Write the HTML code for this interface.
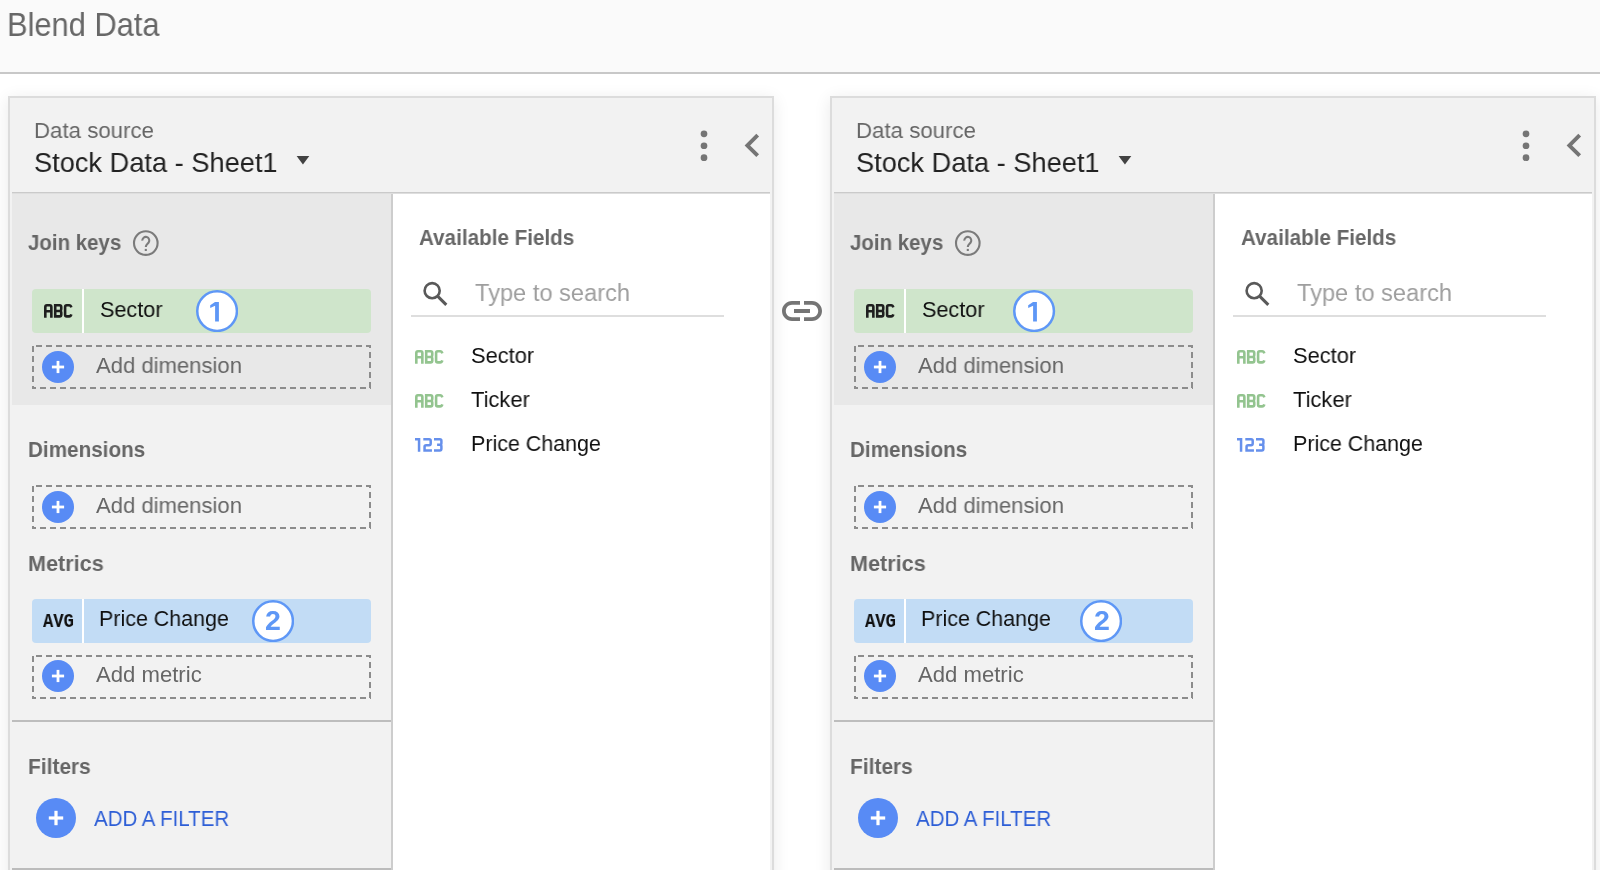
<!DOCTYPE html>
<html><head><meta charset="utf-8"><title>Blend Data</title><style>
html,body{margin:0;padding:0;width:1600px;height:870px;overflow:hidden;background:#fff;font-family:"Liberation Sans",sans-serif}
.a{position:absolute}
.t{position:absolute;white-space:nowrap;transform-origin:0 0;will-change:transform}
.hdr{left:0;top:0;width:1600px;height:72px;background:#fafafa;border-bottom:2px solid #c8c8c8}
.panel{background:#f2f2f2;border:2px solid #dcdcdc;box-shadow:0 3px 16px rgba(0,0,0,0.09)}
.chip{width:339px;height:44px;border-radius:4px}
.g{background:#cfe5cb}
.b{background:#c2dcf5}
.dash{width:335px;height:40px;border:2px dashed #7a7a7a;border-radius:3px}
</style></head>
<body>
<div class="a hdr"></div>
<div class="t" style="left:6.95px;top:7.80px;font-family:'Liberation Sans',sans-serif;font-weight:400;font-size:33.285px;line-height:33.285px;color:#676767;transform:scaleX(0.9274)">Blend Data</div>
<div class="a panel" style="left:8px;top:96px;width:762px;height:800px"></div>
<div class="a" style="left:12px;top:192px;width:758px;height:1px;background:#cacaca"></div>
<div class="a" style="left:12px;top:193px;width:758px;height:1px;background:#dedede"></div>
<div class="a" style="left:12px;top:194px;width:379px;height:211px;background:#e8e8e8"></div>
<div class="a" style="left:391px;top:194px;width:2px;height:700px;background:#cdcdcd"></div>
<div class="a" style="left:393px;top:194px;width:377px;height:700px;background:#fff"></div>
<div class="a" style="left:12px;top:720px;width:379px;height:2px;background:#bdbdbd"></div>
<div class="a" style="left:12px;top:868px;width:379px;height:2px;background:#bcbcbc"></div>
<div class="t" style="left:34.03px;top:118.60px;font-family:'Liberation Sans',sans-serif;font-weight:400;font-size:22.675px;line-height:22.675px;color:#666666;transform:scaleX(0.9820)">Data source</div>
<div class="t" style="left:33.71px;top:148.25px;font-family:'Liberation Sans',sans-serif;font-weight:400;font-size:28.562px;line-height:28.562px;color:#222222;transform:scaleX(0.9534)">Stock Data - Sheet1</div>
<svg class="a" style="left:296px;top:155px" width="14" height="10" viewBox="0 0 14 10"><path fill="#424242" d="M0.6 1 H13.3 L6.95 9.4 Z"/></svg>
<svg class="a" style="left:696px;top:127.7px" width="16" height="36" viewBox="0 0 16 36"><circle cx="8" cy="5.8" r="3.35" fill="#757575"/><circle cx="8" cy="17.75" r="3.35" fill="#757575"/><circle cx="8" cy="29.7" r="3.35" fill="#757575"/></svg>
<svg class="a" style="left:728.7px;top:122.2px" width="46.8" height="46.8" viewBox="0 0 24 24"><path fill="#757575" d="M15.41 7.41L14 6l-6 6 6 6 1.41-1.41L10.83 12z"/></svg>
<div class="t" style="left:28.16px;top:231.60px;font-family:'Liberation Sans',sans-serif;font-weight:700;font-size:21.221px;line-height:21.221px;color:#666666;transform:scaleX(0.9640)">Join keys</div>
<svg class="a" style="left:128px;top:226px" width="36" height="36" viewBox="128 226 36 36"><circle cx="145.8" cy="243.1" r="11.8" fill="none" stroke="#7b7b7b" stroke-width="2.1"/><path d="M142.3 240.6 A3.5 3.5 0 1 1 148.7 242.4 C147.7 243.9 145.8 244.6 145.8 246.9" fill="none" stroke="#7b7b7b" stroke-width="2.1"/><rect x="144.75" y="248.9" width="2.1" height="2.1" fill="#7b7b7b"/></svg>
<div class="a chip g" style="left:32px;top:289px"></div>
<div class="a" style="left:82px;top:289px;width:2px;height:44px;background:#fff"></div>
<svg class="a" style="left:44.3px;top:304.2px" width="30" height="13.7" viewBox="0 0 30 13.7"><g fill="none" stroke="#1f1f1f" stroke-width="2.6" stroke-linejoin="miter"><path transform="translate(0.00,0)" d="M1.3,13.7 V2.9000000000000004 Q1.3,1.3 2.9000000000000004,1.3 H5.75 Q7.3500000000000005,1.3 7.3500000000000005,2.9000000000000004 V13.7 M1.3,7.2 H7.3500000000000005"/><path transform="translate(9.90,0)" d="M1.3,0 V13.7 M0,1.3 H5.75 Q7.3500000000000005,1.3 7.3500000000000005,2.9000000000000004 V4.700000000000001 Q7.3500000000000005,7.0 5.75,7.0 H1.3 M5.75,7.0 Q7.3500000000000005,7.0 7.3500000000000005,8.6 V10.799999999999999 Q7.3500000000000005,12.399999999999999 5.75,12.399999999999999 H0"/><path transform="translate(19.80,0)" d="M7.550000000000001,3.3 Q6.95,1.3 5.3500000000000005,1.3 H2.9000000000000004 Q1.3,1.3 1.3,2.9000000000000004 V10.799999999999999 Q1.3,12.399999999999999 2.9000000000000004,12.399999999999999 H5.3500000000000005 Q6.95,12.399999999999999 7.550000000000001,10.399999999999999"/></g></svg>
<div class="t" style="left:99.77px;top:299.00px;font-family:'Liberation Sans',sans-serif;font-weight:400;font-size:22.166px;line-height:22.166px;color:#0f0f0f;transform:scaleX(0.9761)">Sector</div>
<svg class="a" style="left:195.60px;top:290.10px" width="42.2" height="42.2" viewBox="0 0 42.2 42.2"><circle cx="21.1" cy="21.1" r="19.85" fill="#fff" stroke="#5e97f6" stroke-width="2.5"/></svg>
<svg class="a" style="left:210.40px;top:301.90px" width="10" height="20" viewBox="0 0 10 20"><path fill="#5e97f6" d="M5.0 0 H8.9 V19.5 H5.1 V3.7 L0.2 5.9 V3.2 Z"/></svg>
<svg class="a" style="left:32px;top:345px" width="339" height="44" viewBox="0 0 339 44"><g stroke="#8c8c8c" stroke-width="2" stroke-dasharray="6 4" fill="none"><line x1="0" y1="1" x2="339" y2="1" stroke-dashoffset="6"/><line x1="338" y1="0" x2="338" y2="44" stroke-dashoffset="3"/><line x1="0" y1="43" x2="339" y2="43" stroke-dashoffset="2"/><line x1="1" y1="0" x2="1" y2="44" stroke-dashoffset="9"/></g></svg>
<svg class="a" style="left:41.80px;top:350.60px" width="32" height="32" viewBox="0 0 32 32"><circle cx="16" cy="16" r="16" fill="#588bf5"/><rect x="9.9" y="14.6" width="12.2" height="2.8" fill="#fff"/><rect x="14.6" y="9.9" width="2.8" height="12.2" fill="#fff"/></svg>
<div class="t" style="left:96.00px;top:354.80px;font-family:'Liberation Sans',sans-serif;font-weight:400;font-size:22.239px;line-height:22.239px;color:#666666;transform:scaleX(0.9931)">Add dimension</div>
<div class="t" style="left:27.93px;top:437.80px;font-family:'Liberation Sans',sans-serif;font-weight:700;font-size:22.675px;line-height:22.675px;color:#666666;transform:scaleX(0.9127)">Dimensions</div>
<svg class="a" style="left:32px;top:485px" width="339" height="44" viewBox="0 0 339 44"><g stroke="#8c8c8c" stroke-width="2" stroke-dasharray="6 4" fill="none"><line x1="0" y1="1" x2="339" y2="1" stroke-dashoffset="6"/><line x1="338" y1="0" x2="338" y2="44" stroke-dashoffset="3"/><line x1="0" y1="43" x2="339" y2="43" stroke-dashoffset="2"/><line x1="1" y1="0" x2="1" y2="44" stroke-dashoffset="9"/></g></svg>
<svg class="a" style="left:41.80px;top:490.60px" width="32" height="32" viewBox="0 0 32 32"><circle cx="16" cy="16" r="16" fill="#588bf5"/><rect x="9.9" y="14.6" width="12.2" height="2.8" fill="#fff"/><rect x="14.6" y="9.9" width="2.8" height="12.2" fill="#fff"/></svg>
<div class="t" style="left:96.00px;top:494.80px;font-family:'Liberation Sans',sans-serif;font-weight:400;font-size:22.239px;line-height:22.239px;color:#666666;transform:scaleX(0.9931)">Add dimension</div>
<div class="t" style="left:27.55px;top:552.90px;font-family:'Liberation Sans',sans-serif;font-weight:700;font-size:22.384px;line-height:22.384px;color:#666666;transform:scaleX(0.9658)">Metrics</div>
<div class="a chip b" style="left:32px;top:599px"></div>
<div class="a" style="left:82px;top:599px;width:2px;height:44px;background:#fff"></div>
<div class="t" style="left:42.90px;top:612.10px;font-family:'Liberation Mono',monospace;font-weight:700;font-size:20.040px;line-height:20.040px;color:#0f0f0f;transform:scaleX(0.8567)">AVG</div>
<div class="t" style="left:99.23px;top:608.20px;font-family:'Liberation Sans',sans-serif;font-weight:400;font-size:22.457px;line-height:22.457px;color:#0f0f0f;transform:scaleX(0.9553)">Price Change</div>
<svg class="a" style="left:251.70px;top:599.50px" width="42.2" height="42.2" viewBox="0 0 42.2 42.2"><circle cx="21.1" cy="21.1" r="19.85" fill="#fff" stroke="#5e97f6" stroke-width="2.5"/></svg>
<div class="t" style="left:265.27px;top:607.40px;font-family:'Liberation Sans',sans-serif;font-weight:700;font-size:27.617px;line-height:27.617px;color:#5e97f6;transform:scaleX(1.0340)">2</div>
<svg class="a" style="left:32px;top:655px" width="339" height="44" viewBox="0 0 339 44"><g stroke="#8c8c8c" stroke-width="2" stroke-dasharray="6 4" fill="none"><line x1="0" y1="1" x2="339" y2="1" stroke-dashoffset="6"/><line x1="338" y1="0" x2="338" y2="44" stroke-dashoffset="3"/><line x1="0" y1="43" x2="339" y2="43" stroke-dashoffset="2"/><line x1="1" y1="0" x2="1" y2="44" stroke-dashoffset="9"/></g></svg>
<svg class="a" style="left:41.80px;top:660.40px" width="32" height="32" viewBox="0 0 32 32"><circle cx="16" cy="16" r="16" fill="#588bf5"/><rect x="9.9" y="14.6" width="12.2" height="2.8" fill="#fff"/><rect x="14.6" y="9.9" width="2.8" height="12.2" fill="#fff"/></svg>
<div class="t" style="left:96.40px;top:664.00px;font-family:'Liberation Sans',sans-serif;font-weight:400;font-size:21.803px;line-height:21.803px;color:#666666;transform:scaleX(1.0145)">Add metric</div>
<div class="t" style="left:27.50px;top:756.20px;font-family:'Liberation Sans',sans-serif;font-weight:700;font-size:22.457px;line-height:22.457px;color:#666666;transform:scaleX(0.9323)">Filters</div>
<svg class="a" style="left:36.00px;top:798.20px" width="40" height="40" viewBox="0 0 40 40"><circle cx="20" cy="20" r="20" fill="#588bf5"/><rect x="12.8" y="18.4" width="14.4" height="3.2" fill="#fff"/><rect x="18.4" y="12.8" width="3.2" height="14.4" fill="#fff"/></svg>
<div class="t" style="left:94.30px;top:808.20px;font-family:'Liberation Sans',sans-serif;font-weight:400;font-size:22.457px;line-height:22.457px;color:#2d5ed6;transform:scaleX(0.9138)">ADD A FILTER</div>
<div class="t" style="left:418.92px;top:226.70px;font-family:'Liberation Sans',sans-serif;font-weight:700;font-size:21.657px;line-height:21.657px;color:#676767;transform:scaleX(0.9536)">Available Fields</div>
<svg class="a" style="left:0px;top:0px" width="460" height="320" viewBox="0 0 460 320"><circle cx="432.15" cy="290.7" r="7.55" fill="none" stroke="#595959" stroke-width="2.6"/><path d="M437.6 296.15 L446.3 304.85" stroke="#595959" stroke-width="3"/></svg>
<div class="t" style="left:475.21px;top:281.00px;font-family:'Liberation Sans',sans-serif;font-weight:400;font-size:24.128px;line-height:24.128px;color:#9e9e9e;transform:scaleX(0.9801)">Type to search</div>
<div class="a" style="left:411px;top:315px;width:313px;height:2px;background:#dedede"></div>
<svg class="a" style="left:415.2px;top:350px" width="30" height="13.7" viewBox="0 0 30 13.7"><g fill="none" stroke="#93c48f" stroke-width="2.6" stroke-linejoin="miter"><path transform="translate(0.00,0)" d="M1.3,13.7 V2.9000000000000004 Q1.3,1.3 2.9000000000000004,1.3 H5.75 Q7.3500000000000005,1.3 7.3500000000000005,2.9000000000000004 V13.7 M1.3,7.2 H7.3500000000000005"/><path transform="translate(9.90,0)" d="M1.3,0 V13.7 M0,1.3 H5.75 Q7.3500000000000005,1.3 7.3500000000000005,2.9000000000000004 V4.700000000000001 Q7.3500000000000005,7.0 5.75,7.0 H1.3 M5.75,7.0 Q7.3500000000000005,7.0 7.3500000000000005,8.6 V10.799999999999999 Q7.3500000000000005,12.399999999999999 5.75,12.399999999999999 H0"/><path transform="translate(19.80,0)" d="M7.550000000000001,3.3 Q6.95,1.3 5.3500000000000005,1.3 H2.9000000000000004 Q1.3,1.3 1.3,2.9000000000000004 V10.799999999999999 Q1.3,12.399999999999999 2.9000000000000004,12.399999999999999 H5.3500000000000005 Q6.95,12.399999999999999 7.550000000000001,10.399999999999999"/></g></svg>
<div class="t" style="left:470.51px;top:344.70px;font-family:'Liberation Sans',sans-serif;font-weight:400;font-size:22.093px;line-height:22.093px;color:#0f0f0f;transform:scaleX(0.9888)">Sector</div>
<svg class="a" style="left:415.2px;top:394px" width="30" height="13.7" viewBox="0 0 30 13.7"><g fill="none" stroke="#93c48f" stroke-width="2.6" stroke-linejoin="miter"><path transform="translate(0.00,0)" d="M1.3,13.7 V2.9000000000000004 Q1.3,1.3 2.9000000000000004,1.3 H5.75 Q7.3500000000000005,1.3 7.3500000000000005,2.9000000000000004 V13.7 M1.3,7.2 H7.3500000000000005"/><path transform="translate(9.90,0)" d="M1.3,0 V13.7 M0,1.3 H5.75 Q7.3500000000000005,1.3 7.3500000000000005,2.9000000000000004 V4.700000000000001 Q7.3500000000000005,7.0 5.75,7.0 H1.3 M5.75,7.0 Q7.3500000000000005,7.0 7.3500000000000005,8.6 V10.799999999999999 Q7.3500000000000005,12.399999999999999 5.75,12.399999999999999 H0"/><path transform="translate(19.80,0)" d="M7.550000000000001,3.3 Q6.95,1.3 5.3500000000000005,1.3 H2.9000000000000004 Q1.3,1.3 1.3,2.9000000000000004 V10.799999999999999 Q1.3,12.399999999999999 2.9000000000000004,12.399999999999999 H5.3500000000000005 Q6.95,12.399999999999999 7.550000000000001,10.399999999999999"/></g></svg>
<div class="t" style="left:471.30px;top:389.00px;font-family:'Liberation Sans',sans-serif;font-weight:400;font-size:22.093px;line-height:22.093px;color:#0f0f0f;transform:scaleX(0.9915)">Ticker</div>
<svg class="a" style="left:415.0px;top:438px" width="30" height="13.7" viewBox="0 0 30 13.7"><g fill="none" stroke="#6690ec" stroke-width="2.5" stroke-linejoin="miter"><path transform="translate(0.00,0)" d="M0,1.25 H5.3 M4.05,0 V13.7"/><path transform="translate(8.30,0)" d="M0,1.25 H5.800000000000001 Q7.4,1.25 7.4,2.85 V5.6 Q7.4,7.2 5.800000000000001,7.2 H2.85 Q1.25,7.2 1.25,8.8 V12.45 H8.65"/><path transform="translate(19.00,0)" d="M0,1.25 H5.800000000000001 Q7.4,1.25 7.4,2.85 V5.25 Q7.4,6.8500000000000005 5.800000000000001,6.8500000000000005 H3.1 M5.800000000000001,6.8500000000000005 Q7.4,6.8500000000000005 7.4,8.450000000000001 V10.85 Q7.4,12.45 5.800000000000001,12.45 H0"/></g></svg>
<div class="t" style="left:470.57px;top:432.80px;font-family:'Liberation Sans',sans-serif;font-weight:400;font-size:21.657px;line-height:21.657px;color:#0f0f0f;transform:scaleX(0.9907)">Price Change</div>
<div class="a panel" style="left:830px;top:96px;width:762px;height:800px"></div>
<div class="a" style="left:834px;top:192px;width:758px;height:1px;background:#cacaca"></div>
<div class="a" style="left:834px;top:193px;width:758px;height:1px;background:#dedede"></div>
<div class="a" style="left:834px;top:194px;width:379px;height:211px;background:#e8e8e8"></div>
<div class="a" style="left:1213px;top:194px;width:2px;height:700px;background:#cdcdcd"></div>
<div class="a" style="left:1215px;top:194px;width:377px;height:700px;background:#fff"></div>
<div class="a" style="left:834px;top:720px;width:379px;height:2px;background:#bdbdbd"></div>
<div class="a" style="left:834px;top:868px;width:379px;height:2px;background:#bcbcbc"></div>
<div class="t" style="left:856.03px;top:118.60px;font-family:'Liberation Sans',sans-serif;font-weight:400;font-size:22.675px;line-height:22.675px;color:#666666;transform:scaleX(0.9820)">Data source</div>
<div class="t" style="left:855.71px;top:148.25px;font-family:'Liberation Sans',sans-serif;font-weight:400;font-size:28.562px;line-height:28.562px;color:#222222;transform:scaleX(0.9534)">Stock Data - Sheet1</div>
<svg class="a" style="left:1118px;top:155px" width="14" height="10" viewBox="0 0 14 10"><path fill="#424242" d="M0.6 1 H13.3 L6.95 9.4 Z"/></svg>
<svg class="a" style="left:1518px;top:127.7px" width="16" height="36" viewBox="0 0 16 36"><circle cx="8" cy="5.8" r="3.35" fill="#757575"/><circle cx="8" cy="17.75" r="3.35" fill="#757575"/><circle cx="8" cy="29.7" r="3.35" fill="#757575"/></svg>
<svg class="a" style="left:1550.7px;top:122.2px" width="46.8" height="46.8" viewBox="0 0 24 24"><path fill="#757575" d="M15.41 7.41L14 6l-6 6 6 6 1.41-1.41L10.83 12z"/></svg>
<div class="t" style="left:850.16px;top:231.60px;font-family:'Liberation Sans',sans-serif;font-weight:700;font-size:21.221px;line-height:21.221px;color:#666666;transform:scaleX(0.9640)">Join keys</div>
<svg class="a" style="left:950px;top:226px" width="36" height="36" viewBox="128 226 36 36"><circle cx="145.8" cy="243.1" r="11.8" fill="none" stroke="#7b7b7b" stroke-width="2.1"/><path d="M142.3 240.6 A3.5 3.5 0 1 1 148.7 242.4 C147.7 243.9 145.8 244.6 145.8 246.9" fill="none" stroke="#7b7b7b" stroke-width="2.1"/><rect x="144.75" y="248.9" width="2.1" height="2.1" fill="#7b7b7b"/></svg>
<div class="a chip g" style="left:854px;top:289px"></div>
<div class="a" style="left:904px;top:289px;width:2px;height:44px;background:#fff"></div>
<svg class="a" style="left:866.3px;top:304.2px" width="30" height="13.7" viewBox="0 0 30 13.7"><g fill="none" stroke="#1f1f1f" stroke-width="2.6" stroke-linejoin="miter"><path transform="translate(0.00,0)" d="M1.3,13.7 V2.9000000000000004 Q1.3,1.3 2.9000000000000004,1.3 H5.75 Q7.3500000000000005,1.3 7.3500000000000005,2.9000000000000004 V13.7 M1.3,7.2 H7.3500000000000005"/><path transform="translate(9.90,0)" d="M1.3,0 V13.7 M0,1.3 H5.75 Q7.3500000000000005,1.3 7.3500000000000005,2.9000000000000004 V4.700000000000001 Q7.3500000000000005,7.0 5.75,7.0 H1.3 M5.75,7.0 Q7.3500000000000005,7.0 7.3500000000000005,8.6 V10.799999999999999 Q7.3500000000000005,12.399999999999999 5.75,12.399999999999999 H0"/><path transform="translate(19.80,0)" d="M7.550000000000001,3.3 Q6.95,1.3 5.3500000000000005,1.3 H2.9000000000000004 Q1.3,1.3 1.3,2.9000000000000004 V10.799999999999999 Q1.3,12.399999999999999 2.9000000000000004,12.399999999999999 H5.3500000000000005 Q6.95,12.399999999999999 7.550000000000001,10.399999999999999"/></g></svg>
<div class="t" style="left:921.77px;top:299.00px;font-family:'Liberation Sans',sans-serif;font-weight:400;font-size:22.166px;line-height:22.166px;color:#0f0f0f;transform:scaleX(0.9761)">Sector</div>
<svg class="a" style="left:1013.40px;top:290.10px" width="42.2" height="42.2" viewBox="0 0 42.2 42.2"><circle cx="21.1" cy="21.1" r="19.85" fill="#fff" stroke="#5e97f6" stroke-width="2.5"/></svg>
<svg class="a" style="left:1028.20px;top:301.90px" width="10" height="20" viewBox="0 0 10 20"><path fill="#5e97f6" d="M5.0 0 H8.9 V19.5 H5.1 V3.7 L0.2 5.9 V3.2 Z"/></svg>
<svg class="a" style="left:854px;top:345px" width="339" height="44" viewBox="0 0 339 44"><g stroke="#8c8c8c" stroke-width="2" stroke-dasharray="6 4" fill="none"><line x1="0" y1="1" x2="339" y2="1" stroke-dashoffset="6"/><line x1="338" y1="0" x2="338" y2="44" stroke-dashoffset="3"/><line x1="0" y1="43" x2="339" y2="43" stroke-dashoffset="2"/><line x1="1" y1="0" x2="1" y2="44" stroke-dashoffset="9"/></g></svg>
<svg class="a" style="left:863.80px;top:350.60px" width="32" height="32" viewBox="0 0 32 32"><circle cx="16" cy="16" r="16" fill="#588bf5"/><rect x="9.9" y="14.6" width="12.2" height="2.8" fill="#fff"/><rect x="14.6" y="9.9" width="2.8" height="12.2" fill="#fff"/></svg>
<div class="t" style="left:918.00px;top:354.80px;font-family:'Liberation Sans',sans-serif;font-weight:400;font-size:22.239px;line-height:22.239px;color:#666666;transform:scaleX(0.9931)">Add dimension</div>
<div class="t" style="left:849.93px;top:437.80px;font-family:'Liberation Sans',sans-serif;font-weight:700;font-size:22.675px;line-height:22.675px;color:#666666;transform:scaleX(0.9127)">Dimensions</div>
<svg class="a" style="left:854px;top:485px" width="339" height="44" viewBox="0 0 339 44"><g stroke="#8c8c8c" stroke-width="2" stroke-dasharray="6 4" fill="none"><line x1="0" y1="1" x2="339" y2="1" stroke-dashoffset="6"/><line x1="338" y1="0" x2="338" y2="44" stroke-dashoffset="3"/><line x1="0" y1="43" x2="339" y2="43" stroke-dashoffset="2"/><line x1="1" y1="0" x2="1" y2="44" stroke-dashoffset="9"/></g></svg>
<svg class="a" style="left:863.80px;top:490.60px" width="32" height="32" viewBox="0 0 32 32"><circle cx="16" cy="16" r="16" fill="#588bf5"/><rect x="9.9" y="14.6" width="12.2" height="2.8" fill="#fff"/><rect x="14.6" y="9.9" width="2.8" height="12.2" fill="#fff"/></svg>
<div class="t" style="left:918.00px;top:494.80px;font-family:'Liberation Sans',sans-serif;font-weight:400;font-size:22.239px;line-height:22.239px;color:#666666;transform:scaleX(0.9931)">Add dimension</div>
<div class="t" style="left:849.55px;top:552.90px;font-family:'Liberation Sans',sans-serif;font-weight:700;font-size:22.384px;line-height:22.384px;color:#666666;transform:scaleX(0.9658)">Metrics</div>
<div class="a chip b" style="left:854px;top:599px"></div>
<div class="a" style="left:904px;top:599px;width:2px;height:44px;background:#fff"></div>
<div class="t" style="left:864.90px;top:612.10px;font-family:'Liberation Mono',monospace;font-weight:700;font-size:20.040px;line-height:20.040px;color:#0f0f0f;transform:scaleX(0.8567)">AVG</div>
<div class="t" style="left:921.23px;top:608.20px;font-family:'Liberation Sans',sans-serif;font-weight:400;font-size:22.457px;line-height:22.457px;color:#0f0f0f;transform:scaleX(0.9553)">Price Change</div>
<svg class="a" style="left:1080.00px;top:599.50px" width="42.2" height="42.2" viewBox="0 0 42.2 42.2"><circle cx="21.1" cy="21.1" r="19.85" fill="#fff" stroke="#5e97f6" stroke-width="2.5"/></svg>
<div class="t" style="left:1093.57px;top:607.40px;font-family:'Liberation Sans',sans-serif;font-weight:700;font-size:27.617px;line-height:27.617px;color:#5e97f6;transform:scaleX(1.0340)">2</div>
<svg class="a" style="left:854px;top:655px" width="339" height="44" viewBox="0 0 339 44"><g stroke="#8c8c8c" stroke-width="2" stroke-dasharray="6 4" fill="none"><line x1="0" y1="1" x2="339" y2="1" stroke-dashoffset="6"/><line x1="338" y1="0" x2="338" y2="44" stroke-dashoffset="3"/><line x1="0" y1="43" x2="339" y2="43" stroke-dashoffset="2"/><line x1="1" y1="0" x2="1" y2="44" stroke-dashoffset="9"/></g></svg>
<svg class="a" style="left:863.80px;top:660.40px" width="32" height="32" viewBox="0 0 32 32"><circle cx="16" cy="16" r="16" fill="#588bf5"/><rect x="9.9" y="14.6" width="12.2" height="2.8" fill="#fff"/><rect x="14.6" y="9.9" width="2.8" height="12.2" fill="#fff"/></svg>
<div class="t" style="left:918.40px;top:664.00px;font-family:'Liberation Sans',sans-serif;font-weight:400;font-size:21.803px;line-height:21.803px;color:#666666;transform:scaleX(1.0145)">Add metric</div>
<div class="t" style="left:849.50px;top:756.20px;font-family:'Liberation Sans',sans-serif;font-weight:700;font-size:22.457px;line-height:22.457px;color:#666666;transform:scaleX(0.9323)">Filters</div>
<svg class="a" style="left:858.00px;top:798.20px" width="40" height="40" viewBox="0 0 40 40"><circle cx="20" cy="20" r="20" fill="#588bf5"/><rect x="12.8" y="18.4" width="14.4" height="3.2" fill="#fff"/><rect x="18.4" y="12.8" width="3.2" height="14.4" fill="#fff"/></svg>
<div class="t" style="left:916.30px;top:808.20px;font-family:'Liberation Sans',sans-serif;font-weight:400;font-size:22.457px;line-height:22.457px;color:#2d5ed6;transform:scaleX(0.9138)">ADD A FILTER</div>
<div class="t" style="left:1240.92px;top:226.70px;font-family:'Liberation Sans',sans-serif;font-weight:700;font-size:21.657px;line-height:21.657px;color:#676767;transform:scaleX(0.9536)">Available Fields</div>
<svg class="a" style="left:822px;top:0px" width="460" height="320" viewBox="0 0 460 320"><circle cx="432.15" cy="290.7" r="7.55" fill="none" stroke="#595959" stroke-width="2.6"/><path d="M437.6 296.15 L446.3 304.85" stroke="#595959" stroke-width="3"/></svg>
<div class="t" style="left:1297.21px;top:281.00px;font-family:'Liberation Sans',sans-serif;font-weight:400;font-size:24.128px;line-height:24.128px;color:#9e9e9e;transform:scaleX(0.9801)">Type to search</div>
<div class="a" style="left:1233px;top:315px;width:313px;height:2px;background:#dedede"></div>
<svg class="a" style="left:1237.2px;top:350px" width="30" height="13.7" viewBox="0 0 30 13.7"><g fill="none" stroke="#93c48f" stroke-width="2.6" stroke-linejoin="miter"><path transform="translate(0.00,0)" d="M1.3,13.7 V2.9000000000000004 Q1.3,1.3 2.9000000000000004,1.3 H5.75 Q7.3500000000000005,1.3 7.3500000000000005,2.9000000000000004 V13.7 M1.3,7.2 H7.3500000000000005"/><path transform="translate(9.90,0)" d="M1.3,0 V13.7 M0,1.3 H5.75 Q7.3500000000000005,1.3 7.3500000000000005,2.9000000000000004 V4.700000000000001 Q7.3500000000000005,7.0 5.75,7.0 H1.3 M5.75,7.0 Q7.3500000000000005,7.0 7.3500000000000005,8.6 V10.799999999999999 Q7.3500000000000005,12.399999999999999 5.75,12.399999999999999 H0"/><path transform="translate(19.80,0)" d="M7.550000000000001,3.3 Q6.95,1.3 5.3500000000000005,1.3 H2.9000000000000004 Q1.3,1.3 1.3,2.9000000000000004 V10.799999999999999 Q1.3,12.399999999999999 2.9000000000000004,12.399999999999999 H5.3500000000000005 Q6.95,12.399999999999999 7.550000000000001,10.399999999999999"/></g></svg>
<div class="t" style="left:1292.51px;top:344.70px;font-family:'Liberation Sans',sans-serif;font-weight:400;font-size:22.093px;line-height:22.093px;color:#0f0f0f;transform:scaleX(0.9888)">Sector</div>
<svg class="a" style="left:1237.2px;top:394px" width="30" height="13.7" viewBox="0 0 30 13.7"><g fill="none" stroke="#93c48f" stroke-width="2.6" stroke-linejoin="miter"><path transform="translate(0.00,0)" d="M1.3,13.7 V2.9000000000000004 Q1.3,1.3 2.9000000000000004,1.3 H5.75 Q7.3500000000000005,1.3 7.3500000000000005,2.9000000000000004 V13.7 M1.3,7.2 H7.3500000000000005"/><path transform="translate(9.90,0)" d="M1.3,0 V13.7 M0,1.3 H5.75 Q7.3500000000000005,1.3 7.3500000000000005,2.9000000000000004 V4.700000000000001 Q7.3500000000000005,7.0 5.75,7.0 H1.3 M5.75,7.0 Q7.3500000000000005,7.0 7.3500000000000005,8.6 V10.799999999999999 Q7.3500000000000005,12.399999999999999 5.75,12.399999999999999 H0"/><path transform="translate(19.80,0)" d="M7.550000000000001,3.3 Q6.95,1.3 5.3500000000000005,1.3 H2.9000000000000004 Q1.3,1.3 1.3,2.9000000000000004 V10.799999999999999 Q1.3,12.399999999999999 2.9000000000000004,12.399999999999999 H5.3500000000000005 Q6.95,12.399999999999999 7.550000000000001,10.399999999999999"/></g></svg>
<div class="t" style="left:1293.30px;top:389.00px;font-family:'Liberation Sans',sans-serif;font-weight:400;font-size:22.093px;line-height:22.093px;color:#0f0f0f;transform:scaleX(0.9915)">Ticker</div>
<svg class="a" style="left:1237.0px;top:438px" width="30" height="13.7" viewBox="0 0 30 13.7"><g fill="none" stroke="#6690ec" stroke-width="2.5" stroke-linejoin="miter"><path transform="translate(0.00,0)" d="M0,1.25 H5.3 M4.05,0 V13.7"/><path transform="translate(8.30,0)" d="M0,1.25 H5.800000000000001 Q7.4,1.25 7.4,2.85 V5.6 Q7.4,7.2 5.800000000000001,7.2 H2.85 Q1.25,7.2 1.25,8.8 V12.45 H8.65"/><path transform="translate(19.00,0)" d="M0,1.25 H5.800000000000001 Q7.4,1.25 7.4,2.85 V5.25 Q7.4,6.8500000000000005 5.800000000000001,6.8500000000000005 H3.1 M5.800000000000001,6.8500000000000005 Q7.4,6.8500000000000005 7.4,8.450000000000001 V10.85 Q7.4,12.45 5.800000000000001,12.45 H0"/></g></svg>
<div class="t" style="left:1292.57px;top:432.80px;font-family:'Liberation Sans',sans-serif;font-weight:400;font-size:21.657px;line-height:21.657px;color:#0f0f0f;transform:scaleX(0.9907)">Price Change</div>
<svg class="a" style="left:778px;top:287.25px" width="48" height="48" viewBox="0 0 24 24"><path fill="#757575" d="M3.9 12c0-1.71 1.39-3.1 3.1-3.1h4V7H7c-2.76 0-5 2.24-5 5s2.24 5 5 5h4v-1.9H7c-1.71 0-3.1-1.39-3.1-3.1zM8 13h8v-2H8v2zm9-6h-4v1.9h4c1.71 0 3.1 1.39 3.1 3.1s-1.39 3.1-3.1 3.1h-4V17h4c2.76 0 5-2.24 5-5s-2.24-5-5-5z"/></svg>
</body></html>
